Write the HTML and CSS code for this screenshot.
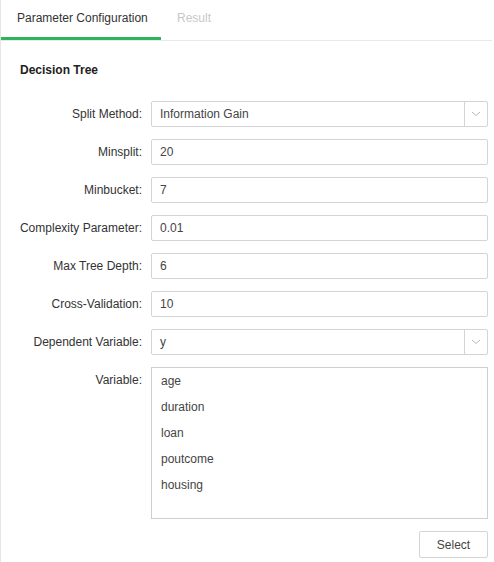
FILE: index.html
```html
<!DOCTYPE html>
<html>
<head>
<meta charset="utf-8">
<link rel="stylesheet" href="styles.css">
</head>
<body>
<div class="panel">
  <div class="tabs">
    <div class="tab active">Parameter Configuration</div>
    <div class="tab muted">Result</div>
  </div>
  <div class="content">
    <div class="title">Decision Tree</div>
    <div class="form">
      <div class="row">
        <div class="label">Split Method:</div>
        <div class="field select"><span class="val">Information Gain</span><span class="arrow"><svg width="10" height="6" viewBox="0 0 10 6"><path d="M1 1 L5 4.5 L9 1" fill="none" stroke="#bbb" stroke-width="1"/></svg></span></div>
      </div>
      <div class="row">
        <div class="label">Minsplit:</div>
        <div class="field"><span class="val">20</span></div>
      </div>
      <div class="row">
        <div class="label">Minbucket:</div>
        <div class="field"><span class="val">7</span></div>
      </div>
      <div class="row">
        <div class="label">Complexity Parameter:</div>
        <div class="field"><span class="val">0.01</span></div>
      </div>
      <div class="row">
        <div class="label">Max Tree Depth:</div>
        <div class="field"><span class="val">6</span></div>
      </div>
      <div class="row">
        <div class="label">Cross-Validation:</div>
        <div class="field"><span class="val">10</span></div>
      </div>
      <div class="row">
        <div class="label">Dependent Variable:</div>
        <div class="field select"><span class="val">y</span><span class="arrow"><svg width="10" height="6" viewBox="0 0 10 6"><path d="M1 1 L5 4.5 L9 1" fill="none" stroke="#bbb" stroke-width="1"/></svg></span></div>
      </div>
      <div class="row top">
        <div class="label">Variable:</div>
        <div class="listbox">
          <div class="item">age</div>
          <div class="item">duration</div>
          <div class="item">loan</div>
          <div class="item">poutcome</div>
          <div class="item">housing</div>
        </div>
      </div>
      <div class="actions">
        <button class="btn">Select</button>
      </div>
    </div>
  </div>
</div>
</body>
</html>
```

FILE: styles.css
```css
html, body {
  margin: 0;
  padding: 0;
  background: #fff;
}
body {
  font-family: "Liberation Sans", Arial, sans-serif;
  font-size: 12px;
  color: #333;
}
.panel {
  width: 493px;
  height: 562px;
  border-left: 1px solid #e6e6e6;
  box-sizing: border-box;
}
.tabs {
  display: flex;
  height: 40px;
  border-bottom: 1px solid #e8e8e8;
  margin-right: 1px;
}
.tab {
  height: 37px;
  line-height: 36px;
  padding: 0 16px;
  box-sizing: border-box;
  white-space: nowrap;
}
.tab.active {
  width: 160px;
  border-bottom: 3px solid #2db55d;
  height: 40px;
  padding: 0 0 0 16px;
  color: #333;
}
.tab.muted {
  color: #c8c8c8;
  padding-left: 16px;
}
.content {
  padding: 0 5px 0 15px;
}
.title {
  font-weight: bold;
  font-size: 12px;
  color: #222;
  padding-top: 22px;
  padding-left: 4px;
  height: 60px;
  line-height: 14px;
  box-sizing: border-box;
}
.form {
  display: flex;
  flex-direction: column;
  gap: 12px;
}
.row {
  display: flex;
  align-items: center;
}
.row.top {
  align-items: flex-start;
}
.label {
  flex: 0 0 135px;
  box-sizing: border-box;
  text-align: right;
  padding-right: 9px;
  white-space: nowrap;
  color: #333;
  line-height: 26px;
}
.field {
  flex: 1;
  height: 26px;
  border: 1px solid #d4d4d4;
  border-radius: 2px;
  box-sizing: border-box;
  display: flex;
  align-items: center;
  padding-left: 8px;
  color: #444;
}
.field .val {
  flex: 1;
}
.arrow {
  width: 22px;
  height: 24px;
  border-left: 1px solid #d4d4d4;
  display: flex;
  align-items: center;
  justify-content: center;
}
.listbox {
  flex: 1;
  height: 152px;
  border: 1px solid #cfcfcf;
  box-sizing: border-box;
  padding-left: 9px;
  color: #444;
}
.item {
  line-height: 26px;
  height: 26px;
}
.actions {
  display: flex;
  justify-content: flex-end;
}
.btn {
  width: 69px;
  height: 27px;
  border: 1px solid #d4d4d4;
  border-radius: 2px;
  background: #fff;
  font-family: "Liberation Sans", Arial, sans-serif;
  font-size: 12px;
  color: #444;
  padding: 0;
}
```
